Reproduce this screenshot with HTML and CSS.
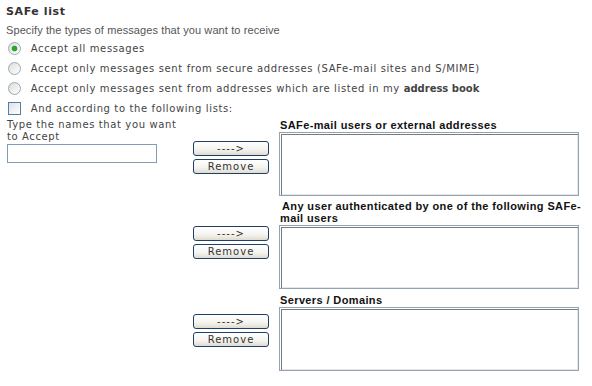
FILE: index.html
```html
<!DOCTYPE html>
<html lang="en">

<head>
    <meta charset="UTF-8">
    <title>SAFe list</title>
    <link rel="stylesheet" href="styles.css">
</head>

<body>
    <div class="page">
        <h3 class="title">SAFe list</h3>
        <p class="intro">Specify the types of messages that you want to receive</p>

        <label class="opt"><input type="radio" name="accept" checked> Accept all messages</label>
        <label class="opt"><input type="radio" name="accept"> Accept only messages sent from secure addresses (SAFe-mail sites and S/MIME)</label>
        <label class="opt"><input type="radio" name="accept"> Accept only messages sent from addresses which are listed in my <b>address book</b></label>
        <label class="opt"><input type="checkbox"> And according to the following lists:</label>

        <div class="lists">
            <div class="names">
                <div class="names-label">Type the names that you want to Accept</div>
                <input type="text" class="name-input">
            </div>
            <div class="btns">
                <button class="btn">----&gt;</button>
                <button class="btn">Remove</button>
            </div>
            <div class="list">
                <div class="list-title">SAFe-mail users or external addresses</div>
                <textarea></textarea>
            </div>

            <div class="btns row2">
                <button class="btn">----&gt;</button>
                <button class="btn">Remove</button>
            </div>
            <div class="list row2">
                <div class="list-title indent">Any user authenticated by one of the following SAFe-mail users</div>
                <textarea></textarea>
            </div>

            <div class="btns row3">
                <button class="btn">----&gt;</button>
                <button class="btn">Remove</button>
            </div>
            <div class="list row3">
                <div class="list-title">Servers / Domains</div>
                <textarea></textarea>
            </div>
        </div>
    </div>
</body>

</html>
```

FILE: styles.css
```css
* {
    margin: 0;
    padding: 0;
    box-sizing: border-box;
}

body {
    background-color: #fff;
    color: #444;
    font-family: "DejaVu Sans", Verdana, sans-serif;
    font-size: 10px;
    letter-spacing: 0.62px;
}

.page {
    padding: 5px 0 0 6px;
}

.title {
    font-size: 11px;
    line-height: 14px;
    letter-spacing: 0.6px;
    color: #333;
}

.intro {
    font-family: "Liberation Sans", Arial, sans-serif;
    font-size: 11px;
    line-height: 14px;
    letter-spacing: 0.1px;
    margin: 4px 0 1px;
    color: #555;
}

.opt {
    display: flex;
    align-items: center;
    height: 20px;
    white-space: pre;
}

.opt b {
    color: #444;
    letter-spacing: 0;
}

.opt input {
    appearance: none;
    width: 13px;
    height: 13px;
    margin: 0 6px 0 2px;
    background: linear-gradient(135deg, #dcdcd7, #fff);
    border: 1px solid #9aa8b8;
    flex-shrink: 0;
}

.opt input[type="radio"] {
    border-radius: 50%;
}

.opt input[type="radio"]:checked {
    background: radial-gradient(circle, #2da42d 0, #2da42d 2.5px, #b8e0b8 3px, transparent 3.5px),
        linear-gradient(135deg, #dcdcd7, #fff);
}

.opt input[type="checkbox"] {
    border-color: #5a7c9e;
    background: linear-gradient(135deg, #dce2ea, #fff);
}

.lists {
    display: grid;
    grid-template-columns: 186px 86px 300px;
    margin: 1px 0 0 1px;
}

.names {
    grid-row: 1;
    grid-column: 1;
    align-self: start;
}

.names-label {
    line-height: 12px;
    width: 180px;
}

.name-input {
    width: 150px;
    height: 19px;
    border: 1px solid #7f9db9;
    margin-top: 1px;
}

.btns {
    grid-column: 2;
    align-self: center;
    display: flex;
    flex-direction: column;
    gap: 3px;
    width: 76px;
}

.btns.row2 {
    grid-row: 2;
}

.btns.row3 {
    grid-row: 3;
}

.btn {
    height: 15px;
    font-family: "DejaVu Sans", Verdana, sans-serif;
    font-size: 10px;
    letter-spacing: 1px;
    color: #333;
    border: 1px solid #1f3f66;
    border-radius: 3px;
    background: linear-gradient(#fff, #f4f3ee 60%, #dedbd0);
}

.list {
    grid-column: 3;
}

.list.row2 {
    grid-row: 2;
    margin-top: 4px;
}

.list.row3 {
    grid-row: 3;
    margin-top: 5px;
}

.list-title {
    font-family: "Liberation Sans", Arial, sans-serif;
    font-weight: bold;
    font-size: 11px;
    line-height: 12px;
    letter-spacing: 0.38px;
    color: #111;
    padding-left: 1px;
}

.list-title.indent {
    text-indent: 2px;
    margin-right: -10px;
}

textarea {
    display: block;
    width: 300px;
    height: 64px;
    margin-top: 1px;
    resize: none;
    border: 1px solid #8fa5b5;
    box-shadow: inset 1px 1px 0 #fff, inset 2px 2px 0 #7a7a7a, inset -1px -1px 0 #eee4e4;
}
```
